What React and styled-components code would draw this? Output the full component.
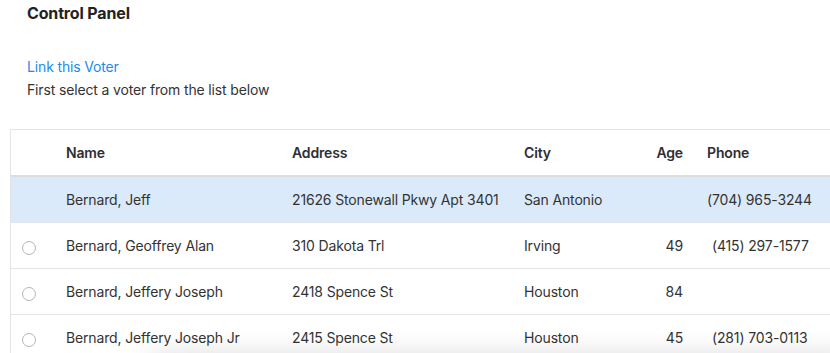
import React from "react";
import styled, { createGlobalStyle } from "styled-components";

const Global = createGlobalStyle`
  html, body { margin: 0; padding: 0; background: #fff; overflow: hidden; }
  body { font-family: Inter, "Noto Sans", "Liberation Sans", sans-serif; color: #333; letter-spacing: -0.15px; }
`;

const Page = styled.div`
  width: 830px;
  height: 353px;
  overflow: hidden;
  position: relative;
  padding-left: 10px;
  box-sizing: border-box;
`;

const Intro = styled.div`
  padding: 3px 0 0 17px;
  display: flex;
  flex-direction: column;
`;

const Title = styled.h2`
  margin: 0;
  font-size: 16px;
  line-height: 20px;
  font-weight: 700;
  color: #222;
`;

const Link = styled.a`
  margin-top: 32px;
  font-size: 14px;
  line-height: 23px;
  color: #1a8cf0;
  text-decoration: none;
  cursor: pointer;
`;

const Hint = styled.p`
  margin: 0;
  font-size: 14px;
  line-height: 23px;
  color: #333;
`;

const Table = styled.div`
  margin-top: 28px;
  border-top: 1px solid #e3e3e8;
  border-left: 1px solid #e3e3e8;
  width: 840px;
`;

const cols = "45px 226px 232px 106px 77px 1fr";

const HeadRow = styled.div`
  display: grid;
  grid-template-columns: ${cols};
  height: 45px;
  align-items: center;
  border-bottom: 2px solid #dedee2;
`;

const Row = styled.div`
  display: grid;
  grid-template-columns: ${cols};
  height: 45px;
  align-items: center;
  border-bottom: 1px solid #e3e3ea;
  background: ${(p) => (p.$selected ? "#dbeafb" : "#fff")};
`;

const HeadCell = styled.div`
  padding: 0 ${(p) => (p.$right ? 14 : 10)}px 0 10px;
  font-size: 14px;
  font-weight: 600;
  color: #2e2e33;
  text-align: ${(p) => (p.$right ? "right" : "left")};
  white-space: nowrap;
`;

const Cell = styled.div`
  padding: 0 ${(p) => (p.$right ? 14 : 10)}px 0 ${(p) => 10 + (p.$shift || 0)}px;
  font-size: 14px;
  color: #333;
  text-align: ${(p) => (p.$right ? "right" : "left")};
  white-space: nowrap;
`;

const RadioCell = styled.div`
  display: flex;
  align-items: center;
  padding-left: 11px;
  padding-top: 4px;
`;

const Radio = styled.span`
  width: 12px;
  height: 12px;
  border-radius: 50%;
  border: 1px solid #b5b5b8;
  background: #fff;
  box-sizing: content-box;
`;

const Drawer = styled.div`
  position: absolute;
  left: 150px;
  right: -30px;
  bottom: -44px;
  height: 44px;
  border-radius: 10px;
  background: #fff;
  box-shadow: 0 0 26px rgba(0, 0, 0, 0.13);
`;

const rows = [
  { name: "Bernard, Jeff", address: "21626 Stonewall Pkwy Apt 3401", city: "San Antonio", age: "", phone: "(704) 965-3244", selected: true },
  { name: "Bernard, Geoffrey Alan", address: "310 Dakota Trl", city: "Irving", age: "49", phone: "(415) 297-1577", shift: 5 },
  { name: "Bernard, Jeffery Joseph", address: "2418 Spence St", city: "Houston", age: "84", phone: "" },
  { name: "Bernard, Jeffery Joseph Jr", address: "2415 Spence St", city: "Houston", age: "45", phone: "(281) 703-0113", shift: 5 },
];

export default function App() {
  return (
    <Page>
      <Global />
      <Intro>
        <Title>Control Panel</Title>
        <Link>Link this Voter</Link>
        <Hint>First select a voter from the list below</Hint>
      </Intro>
      <Table>
        <HeadRow>
          <div />
          <HeadCell>Name</HeadCell>
          <HeadCell>Address</HeadCell>
          <HeadCell>City</HeadCell>
          <HeadCell $right>Age</HeadCell>
          <HeadCell>Phone</HeadCell>
        </HeadRow>
        {rows.map((r) => (
          <Row key={r.name} $selected={r.selected}>
            <RadioCell>{!r.selected && <Radio />}</RadioCell>
            <Cell>{r.name}</Cell>
            <Cell>{r.address}</Cell>
            <Cell>{r.city}</Cell>
            <Cell $right>{r.age}</Cell>
            <Cell $shift={r.shift}>{r.phone}</Cell>
          </Row>
        ))}
      </Table>
      <Drawer />
    </Page>
  );
}
